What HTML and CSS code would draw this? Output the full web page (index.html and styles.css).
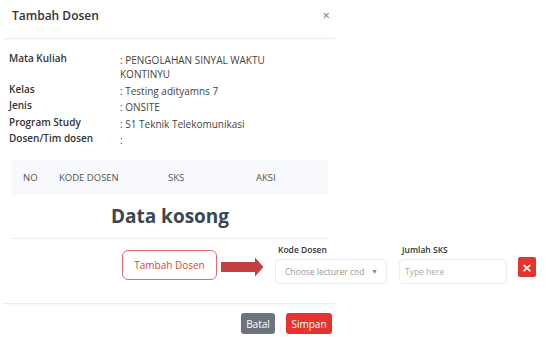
FILE: index.html
```html
<!DOCTYPE html>
<html>
<head>
<meta charset="utf-8">
<link rel="stylesheet" href="styles.css">
</head>
<body>
<div class="modal">
  <div class="modal-header">
    <span class="modal-title">Tambah Dosen</span>
    <span class="close">&times;</span>
  </div>
  <div class="divider"></div>
  <div class="modal-body">
    <div class="info">
      <div class="label">Mata Kuliah</div><div class="value">: PENGOLAHAN SINYAL WAKTU<br>KONTINYU</div>
      <div class="label">Kelas</div><div class="value">: Testing adityamns 7</div>
      <div class="label">Jenis</div><div class="value">: ONSITE</div>
      <div class="label">Program Study</div><div class="value">: S1 Teknik Telekomunikasi</div>
      <div class="label">Dosen/Tim dosen</div><div class="value">:</div>
    </div>
    <div class="table">
      <div class="thead">
        <div class="th">NO</div>
        <div class="th">KODE DOSEN</div>
        <div class="th">SKS</div>
        <div class="th">AKSI</div>
      </div>
      <div class="empty">Data kosong</div>
    </div>
  </div>
  <div class="action-row">
    <button class="btn-outline">Tambah Dosen</button>
    <svg class="arrow" width="43" height="20" viewBox="0 0 43 20">
      <polygon points="0,5 34,5 34,0.5 42.5,10 34,19.5 34,15 0,15" fill="#c4403f"/>
    </svg>
    <div class="field field-kode">
      <div class="field-label">Kode Dosen</div>
      <div class="control select"><span class="ph">Choose lecturer cod</span><span class="caret">&#9660;</span></div>
    </div>
    <div class="field field-sks">
      <div class="field-label">Jumlah SKS</div>
      <div class="control input"><span class="ph">Type here</span></div>
    </div>
    <button class="btn-del">&times;</button>
  </div>
  <div class="divider footer-divider"></div>
  <div class="modal-footer">
    <button class="btn btn-gray">Batal</button>
    <button class="btn btn-red">Simpan</button>
  </div>
</div>
</body>
</html>
```
FILE: styles.css
```css
* { box-sizing: border-box; }
html, body { margin: 0; padding: 0; background: #fff; }
body {
  width: 549px;
  height: 339px;
  overflow: hidden;
  font-family: "Open Sans", "Liberation Sans", sans-serif;
  color: #333;
}
.modal { width: 338px; }
.modal-header {
  height: 38px;
  display: flex;
  align-items: flex-start;
  justify-content: space-between;
  padding: 7px 8px 0 12px;
}
.modal-title { font-size: 12px; font-weight: 600; color: #333; line-height: 17px; }
.close { font-size: 13px; color: #777; line-height: 14px; margin-top: 1px; }
.divider {
  margin: 0 3px;
  height: 1px;
  background: #ededed;
  box-shadow: 0 1px 1px rgba(0,0,0,0.03);
}
.modal-body { padding: 14px 10px 0 9px; }
.info {
  display: grid;
  grid-template-columns: 111px 1fr;
  row-gap: 2.5px;
}
.label { font-size: 10px; font-weight: 600; color: #333; line-height: 11px; }
.value { font-size: 10px; color: #444; line-height: 14px; }
.table { margin: 13px 0 0 3px; width: 316px; }
.thead {
  display: grid;
  grid-template-columns: 36px 109px 88px 83px;
  height: 35px;
  align-items: center;
  background: #f7f9fc;
}
.th { padding-left: 11px; font-size: 9.5px; color: #555; }
.empty {
  height: 44px;
  border-bottom: 1px solid #ececec;
  display: flex;
  align-items: center;
  justify-content: center;
  font-size: 19px;
  font-weight: 700;
  color: #3b4650;
  padding-bottom: 2px;
}
.action-row {
  width: 549px;
  display: flex;
  align-items: flex-start;
  padding: 5px 0 0 122px;
  height: 64px;
}
.btn-outline {
  margin-top: 6px;
  width: 95px;
  height: 30px;
  border: 1px solid #e06b6b;
  border-radius: 6px;
  background: #fff;
  color: #d9443f;
  font-family: inherit;
  font-size: 10px;
  padding: 0;
}
.arrow { margin: 13px 0 0 4px; display: block; }
.field { display: flex; flex-direction: column; }
.field-kode { margin-left: 11px; }
.field-sks { margin-left: 12px; }
.field-label { font-size: 8.5px; font-weight: 600; color: #333; line-height: 12px; height: 12px; margin-bottom: 3px; margin-left: 3px; }
.control {
  height: 25px;
  border: 1px solid #ececec;
  border-radius: 4px;
  display: flex;
  align-items: center;
  font-size: 8.5px;
  color: #999;
}
.select { width: 112px; padding: 0 8px 0 9px; justify-content: space-between; }
.caret { font-size: 7px; color: #888; }
.input { width: 108px; padding-left: 5px; color: #aaa; }
.btn-del {
  margin: 13px 0 0 11px;
  width: 18px;
  height: 20px;
  border: none;
  border-radius: 2px;
  background: #e3342f;
  color: #fff;
  font-size: 13px;
  font-weight: 700;
  line-height: 1;
  padding: 0;
  font-family: "DejaVu Sans", sans-serif;
}
.modal-footer {
  display: flex;
  justify-content: flex-end;
  gap: 11px;
  padding: 9px 6px 0 0;
}
.btn {
  height: 21px;
  border: none;
  border-radius: 3px;
  color: #fff;
  font-family: inherit;
  font-size: 10px;
  padding: 0;
}
.btn-gray { background: #6c757d; width: 34px; }
.btn-red { background: #e3342f; width: 46px; }
```
